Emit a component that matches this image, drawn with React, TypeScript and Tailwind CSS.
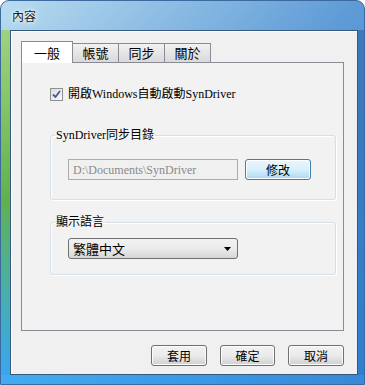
import React from "react";

const cjk = { fontFamily: '"Noto Sans CJK TC", "Noto Sans", sans-serif' };
const mixed = { fontFamily: '"Liberation Serif", "Noto Sans CJK TC", serif' };

function Tab({ label, active }: { label: string; active?: boolean }) {
  if (active) {
    return (
      <div className="relative z-10 -mb-px flex h-[22px] w-[52px] items-center justify-center border border-b-0 border-[#898c95] bg-white text-[13px] text-black">
        {label}
      </div>
    );
  }
  return (
    <div className="-ml-px mt-[2px] flex h-[19px] w-[47px] items-center justify-center border border-b-0 border-[#898c95] bg-gradient-to-b from-[#f2f2f2] to-[#d9d9d9] text-[13px] text-black first:ml-0">
      {label}
    </div>
  );
}

function Button({ label, focused }: { label: string; focused?: boolean }) {
  return (
    <div
      className={
        "flex h-[21px] items-center justify-center rounded-[3px] border text-[12px] text-black " +
        (focused
          ? "border-[#3c7fb1] bg-gradient-to-b from-[#eaf6fd] via-[#d9f0fc] to-[#a7d9f5] shadow-[inset_0_0_0_1px_#ffffff]"
          : "border-[#707070] bg-gradient-to-b from-[#f2f2f2] via-[#ebebeb] to-[#cfcfcf] shadow-[inset_0_0_0_1px_#fcfcfc]")
      }
    >
      {label}
    </div>
  );
}

function GroupBox({ label, children }: { label: string; children: React.ReactNode }) {
  return (
    <fieldset className="rounded-[3px] border border-[#d5dfe5] shadow-[inset_1px_1px_0_#ffffff,1px_1px_0_#ffffff]">
      <legend className="ml-[4px] px-[1px] text-[12px] leading-[14px] text-black" style={mixed}>
        {label}
      </legend>
      {children}
    </fieldset>
  );
}

export default function App() {
  return (
    <div className="h-[385px] w-[365px] overflow-hidden bg-white" style={cjk}>
      <div className="flex h-full w-full flex-col rounded-t-[9px] border border-[#3d6a9e] bg-gradient-to-br from-[#b9dcef] via-[#5d9ad6] to-[#3f7fc6]">
        <div className="flex h-[29px] items-start pl-[11px] pt-[6px]">
          <span className="text-[12px] text-[#1b1b1b] [text-shadow:0_0_6px_#ffffff,0_0_3px_#ffffff]">內容</span>
        </div>
        <div className="flex flex-1">
          <div className="w-[9px] bg-gradient-to-b from-[#9fd27f] via-[#5fb14f] to-[#3aa6ef]" />
          <div className="flex flex-1 flex-col border border-[#33597f] bg-[#f0f0f0] shadow-[inset_1px_1px_0_#ffffff]">
            <div className="flex flex-col pl-[10px] pt-[10px]">
              <div className="flex items-end">
                <Tab label="一般" active />
                <Tab label="帳號" />
                <Tab label="同步" />
                <Tab label="關於" />
              </div>
              <div className="flex h-[269px] w-[323px] flex-col border border-[#898c95] bg-[#f2f2f2] pl-[28px] pr-[7px] pt-[22px]">
                <div className="flex items-center">
                  <div className="flex h-[13px] w-[13px] items-center justify-center border border-[#8f8f8f] bg-gradient-to-br from-[#dcdcdc] to-[#f9f9f9]">
                    <svg width="9" height="9" viewBox="0 0 9 9">
                      <path d="M1 4.5 L3.5 7 L8 1" fill="none" stroke="#3f5a9a" strokeWidth="1.8" />
                    </svg>
                  </div>
                  <span className="ml-[5px] text-[12px] text-black" style={mixed}>
                    開啟Windows自動啟動SynDriver
                  </span>
                </div>
                <div className="mt-[25px]">
                  <GroupBox label="SynDriver同步目錄">
                    <div className="flex items-center pb-[19px] pl-[17px] pt-[17px]">
                      <div className="flex h-[21px] w-[170px] items-center border border-[#abadb3] bg-[#f0f0f0] pl-[4px] text-[12px] text-[#8a8a8a]" style={mixed}>
                        D:\Documents\SynDriver
                      </div>
                      <div className="ml-[7px] w-[66px]">
                        <Button label="修改" focused />
                      </div>
                    </div>
                  </GroupBox>
                </div>
                <div className="mt-[15px]">
                  <GroupBox label="顯示語言">
                    <div className="flex pb-[15px] pl-[17px] pt-[9px]">
                      <div className="flex h-[21px] w-[170px] items-center justify-between rounded-[3px] border border-[#707070] bg-gradient-to-b from-[#f2f2f2] via-[#ebebeb] to-[#d6d6d6] pl-[4px] pr-[6px] text-[13px] text-black">
                        <span>繁體中文</span>
                        <svg width="7" height="4" viewBox="0 0 7 4">
                          <path d="M0 0 H7 L3.5 4 Z" fill="#000" />
                        </svg>
                      </div>
                    </div>
                  </GroupBox>
                </div>
              </div>
            </div>
            <div className="flex justify-end gap-[13px] pr-[13px] pt-[14px]">
              <div className="w-[56px]">
                <Button label="套用" />
              </div>
              <div className="w-[55px]">
                <Button label="確定" />
              </div>
              <div className="w-[56px]">
                <Button label="取消" />
              </div>
            </div>
          </div>
          <div className="w-[6px] bg-gradient-to-b from-[#3f78b8] to-[#2f7fd0]" />
        </div>
        <div className="h-[9px] bg-gradient-to-r from-[#45abf0] via-[#3a9ae4] to-[#3a88d6]" />
      </div>
    </div>
  );
}
